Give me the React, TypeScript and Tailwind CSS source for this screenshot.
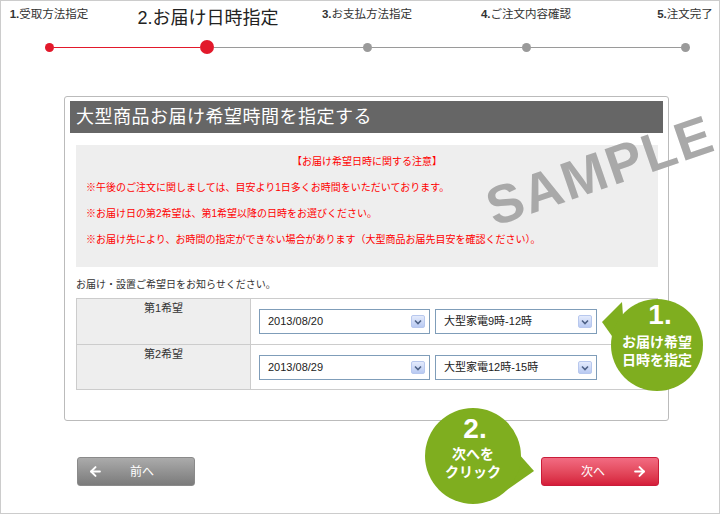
import React from "react";
import { ArrowLeft, ArrowRight } from "lucide-react";

const steps = [
  { no: "1.", label: "受取方法指定", current: false },
  { no: "2.", label: "お届け日時指定", current: true },
  { no: "3.", label: "お支払方法指定", current: false },
  { no: "4.", label: "ご注文内容確認", current: false },
  { no: "5.", label: "注文完了", current: false },
];

const notes = [
  "※午後のご注文に関しましては、目安より1日多くお時間をいただいております。",
  "※お届け日の第2希望は、第1希望以降の日時をお選びください。",
  "※お届け先により、お時間の指定ができない場合があります（大型商品お届先目安を確認ください）。",
];

const wishes = [
  { label: "第1希望", date: "2013/08/20", time: "大型家電9時-12時" },
  { label: "第2希望", date: "2013/08/29", time: "大型家電12時-15時" },
];

const SelectBox = ({ value, width }: { value: string; width: string }) => (
  <div
    className={`${width} h-[25px] border border-[#7f9db9] bg-white flex items-center justify-between pl-[8px] pr-[4px]`}
  >
    <span className="text-[11px] text-[#222] leading-none">{value}</span>
    <span className="w-[14px] h-[13px] rounded-[2px] border border-[#b8c8ee] bg-gradient-to-b from-[#e4ebfc] to-[#b9caf2] flex items-center justify-center">
      <svg width="8" height="6" viewBox="0 0 8 6">
        <path d="M1 1.5 L4 4.5 L7 1.5" fill="none" stroke="#4d6185" strokeWidth="1.6" />
      </svg>
    </span>
  </div>
);

export default function App() {
  return (
    <div className="relative w-[720px] h-[514px] border border-[#cccccc] bg-white overflow-hidden font-['Liberation_Sans','Noto_Sans_CJK_JP',sans-serif] text-[#333]">
      {/* step labels */}
      <div className="ml-[48px] w-[636px] h-[39px] flex justify-between items-start">
        {steps.map((s) => (
          <div key={s.no} className="w-0 flex justify-center whitespace-nowrap">
            {s.current ? (
              <span className="mt-[6px] text-[18px] leading-[22px] text-[#222]">
                {s.no}
                {s.label}
              </span>
            ) : (
              <span className="mt-[5px] text-[11.5px] leading-[16px] text-[#333]">
                <b>{s.no}</b>
                {s.label}
              </span>
            )}
          </div>
        ))}
      </div>

      {/* progress line */}
      <div className="ml-[44px] h-[14px] flex items-center">
        <span className="w-[9px] h-[9px] rounded-full bg-[#e2192b]" />
        <span className="w-[146px] h-px bg-[#e2192b]" />
        <span className="w-[14px] h-[14px] rounded-full bg-[#e2192b]" />
        <span className="w-[149px] h-px bg-[#9a9a9a]" />
        <span className="w-[9px] h-[9px] rounded-full bg-[#9a9a9a]" />
        <span className="w-[150px] h-px bg-[#9a9a9a]" />
        <span className="w-[9px] h-[9px] rounded-full bg-[#9a9a9a]" />
        <span className="w-[150px] h-px bg-[#9a9a9a]" />
        <span className="w-[9px] h-[9px] rounded-full bg-[#9a9a9a]" />
      </div>

      {/* panel */}
      <div className="ml-[63px] mt-[42px] w-[605px] h-[325px] border border-[#bbbbbb] rounded-[3px] px-[5px] pt-[4px]">
        <div className="h-[32px] bg-[#666666] flex items-center pl-[6px]">
          <h1 className="text-white text-[18px] tracking-[0.5px] leading-none">
            大型商品お届け希望時間を指定する
          </h1>
        </div>

        <div className="ml-[6px] mr-[5px] mt-[12px] h-[122px] bg-[#eeeeee] pt-[4px] pl-[10px] text-[#ff0000] text-[10px]">
          <p className="leading-[26px] text-center pr-[10px]">【お届け希望日時に関する注意】</p>
          {notes.map((n) => (
            <p key={n} className="leading-[26px]">
              {n}
            </p>
          ))}
        </div>

        <p className="ml-[6px] mt-[11px] text-[10px] leading-[14px] text-[#333]">
          お届け・設置ご希望日をお知らせください。
        </p>

        <div className="ml-[6px] mr-[5px] mt-[6px] border border-[#cccccc]">
          {wishes.map((w, i) => (
            <div
              key={w.label}
              className={`flex h-[45px] ${i > 0 ? "border-t border-[#cccccc]" : ""}`}
            >
              <div className="w-[174px] bg-[#eeeeee] border-r border-[#cccccc] text-center text-[11px] leading-[14px] pt-[2px] text-[#333]">
                {w.label}
              </div>
              <div className="flex items-start gap-[5px] pl-[8px] pt-[10px]">
                <SelectBox value={w.date} width="w-[171px]" />
                <SelectBox value={w.time} width="w-[162px]" />
              </div>
            </div>
          ))}
        </div>
      </div>

      {/* buttons */}
      <div className="ml-[76px] mt-[36px] w-[582px] flex justify-between">
        <button className="w-[118px] h-[29px] rounded-[3px] border border-[#8a8a8a] bg-gradient-to-b from-[#ababab] to-[#7b7b7b] flex items-center text-white text-[12px] pl-[10px]">
          <ArrowLeft size={15} strokeWidth={3.2} />
          <span className="ml-[27px]">前へ</span>
        </button>
        <button className="w-[118px] h-[29px] rounded-[3px] border border-[#c91d39] bg-gradient-to-b from-[#f26b82] to-[#d51c3a] flex items-center text-white text-[12px] pl-[39px]">
          <span>次へ</span>
          <ArrowRight size={15} strokeWidth={3.2} className="ml-[27px]" />
        </button>
      </div>

      {/* SAMPLE watermark */}
      <div className="absolute left-[481px] top-[139px] w-[236px] h-[60px] flex items-center justify-center rotate-[-19deg] pointer-events-none">
        <span className="text-[54px] font-bold leading-none tracking-[2px] text-[#a9a9a9] font-['Liberation_Sans',sans-serif]">
          SAMPLE
        </span>
      </div>

      {/* bubble 1 */}
      <div className="absolute left-[599px] top-[295px] w-[110px] h-[96px]">
        <svg width="110" height="96" viewBox="0 0 110 96" className="absolute inset-0">
          <polygon points="2,26 22,6 26,60" fill="#7fae1f" />
          <circle cx="57" cy="49" r="46" fill="#7fae1f" />
        </svg>
        <div className="absolute left-[11px] top-[5px] w-[92px] flex flex-col items-center text-white font-bold">
          <span className="text-[28px] leading-[28px] pl-[6px]">1.</span>
          <span className="mt-[4px] text-[14px] leading-[18px]">お届け希望</span>
          <span className="text-[14px] leading-[18px]">日時を指定</span>
        </div>
      </div>

      {/* bubble 2 */}
      <div className="absolute left-[419px] top-[403px] w-[118px] h-[104px]">
        <svg width="118" height="104" viewBox="0 0 118 104" className="absolute inset-0">
          <polygon points="114,67 90,40 84,88" fill="#7fae1f" />
          <circle cx="53" cy="52" r="48" fill="#7fae1f" />
        </svg>
        <div className="absolute left-[5px] top-[11px] w-[96px] flex flex-col items-center text-white font-bold">
          <span className="text-[28px] leading-[28px] pl-[4px]">2.</span>
          <span className="mt-[2px] text-[14px] leading-[18px]">次へを</span>
          <span className="text-[14px] leading-[18px]">クリック</span>
        </div>
      </div>
    </div>
  );
}
